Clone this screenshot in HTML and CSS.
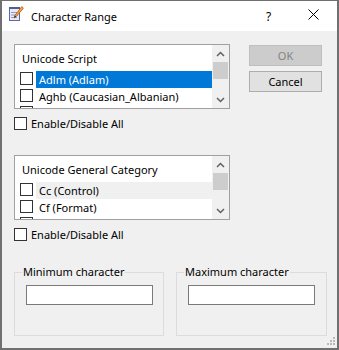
FILE: index.html
```html
<!DOCTYPE html>
<html>
<head>
<meta charset="utf-8">
<link rel="stylesheet" href="styles.css">
</head>
<body>
<div class="window">
  <div class="titlebar">
    <svg class="app-icon" width="16" height="16" viewBox="0 0 16 16">
      <rect x="1.5" y="2.5" width="10" height="12" fill="#e6eaf6" stroke="#5b6aa4"/>
      <rect x="1" y="1" width="11" height="2" fill="#4f5e98"/>
      <line x1="3" y1="6.5" x2="10" y2="6.5" stroke="#8c9ac8"/>
      <line x1="3" y1="9" x2="10" y2="9" stroke="#8c9ac8"/>
      <line x1="3" y1="11.5" x2="9" y2="11.5" stroke="#8c9ac8"/>
      <polygon points="13.8,0.6 15.4,2.2 8.2,10.6 6.2,12 6.8,9.6" fill="#f2b233" stroke="#c0481e" stroke-width="0.8"/>
      <polygon points="6.2,12 6.8,9.6 8.2,10.6" fill="#3a2a20"/>
    </svg>
    <span class="title">Character Range</span>
    <span class="spacer"></span>
    <span class="help">?</span>
    <span class="close">
      <svg width="11" height="11" viewBox="0 0 11 11"><path d="M0.5 0.5 L10.5 10.5 M10.5 0.5 L0.5 10.5" stroke="#000" stroke-width="1"/></svg>
    </span>
  </div>
  <div class="body">
    <div class="top">
      <div class="left">
        <div class="list">
          <div class="list-content">
            <div class="list-header">Unicode Script</div>
            <div class="row selected"><span class="cb"></span><span class="label">Adlm (Adlam)</span></div>
            <div class="row"><span class="cb"></span><span class="label">Aghb (Caucasian_Albanian)</span></div>
            <div class="row"><span class="cb"></span><span class="label"></span></div>
          </div>
          <div class="scrollbar">
            <div class="sb-btn"><svg width="9" height="6" viewBox="0 0 9 6"><path d="M1 5 L4.5 1.5 L8 5" fill="none" stroke="#606060" stroke-width="1.5"/></svg></div>
            <div class="thumb"></div>
            <div class="sb-fill"></div>
            <div class="sb-btn"><svg width="9" height="6" viewBox="0 0 9 6"><path d="M1 1 L4.5 4.5 L8 1" fill="none" stroke="#606060" stroke-width="1.5"/></svg></div>
          </div>
        </div>
        <div class="check-all"><span class="cb"></span><span>Enable/Disable All</span></div>

        <div class="list second">
          <div class="list-content">
            <div class="list-header">Unicode General Category</div>
            <div class="row current"><span class="cb"></span><span class="label">Cc (Control)</span></div>
            <div class="row"><span class="cb"></span><span class="label">Cf (Format)</span></div>
            <div class="row"><span class="cb"></span><span class="label"></span></div>
          </div>
          <div class="scrollbar">
            <div class="sb-btn"><svg width="9" height="6" viewBox="0 0 9 6"><path d="M1 5 L4.5 1.5 L8 5" fill="none" stroke="#606060" stroke-width="1.5"/></svg></div>
            <div class="thumb"></div>
            <div class="sb-fill"></div>
            <div class="sb-btn"><svg width="9" height="6" viewBox="0 0 9 6"><path d="M1 1 L4.5 4.5 L8 1" fill="none" stroke="#606060" stroke-width="1.5"/></svg></div>
          </div>
        </div>
        <div class="check-all"><span class="cb"></span><span>Enable/Disable All</span></div>
      </div>
      <div class="buttons">
        <button class="btn disabled">OK</button>
        <button class="btn">Cancel</button>
      </div>
    </div>
    <div class="groups">
      <fieldset class="group">
        <legend>Minimum character</legend>
        <div class="input"></div>
      </fieldset>
      <fieldset class="group wide">
        <legend>Maximum character</legend>
        <div class="input"></div>
      </fieldset>
    </div>
  </div>
  <svg class="grip" width="8" height="8" viewBox="0 0 8 8">
    <rect x="6" y="0" width="2" height="2" fill="#b9b9b9"/>
    <rect x="3" y="3" width="2" height="2" fill="#b9b9b9"/>
    <rect x="6" y="3" width="2" height="2" fill="#b9b9b9"/>
    <rect x="0" y="6" width="2" height="2" fill="#b9b9b9"/>
    <rect x="3" y="6" width="2" height="2" fill="#b9b9b9"/>
    <rect x="6" y="6" width="2" height="2" fill="#b9b9b9"/>
  </svg>
</div>
</body>
</html>
```
FILE: styles.css
```css
html, body {
  margin: 0;
  padding: 0;
  background: #f0f0f0;
}

.window {
  position: relative;
  width: 339px;
  height: 350px;
  box-sizing: border-box;
  border-style: solid;
  border-color: #707070;
  border-width: 1px 2px 2px 2px;
  background: #f0f0f0;
  display: flex;
  flex-direction: column;
  font-family: "Noto Sans", sans-serif;
  font-size: 11px;
  color: #000;
}

.titlebar {
  height: 30px;
  flex: none;
  background: #fff;
  display: flex;
  align-items: center;
}

.app-icon {
  flex: none;
  margin-left: 6px;
  margin-bottom: 4px;
}

.title {
  margin-left: 7px;
  font-size: 11px;
}

.spacer {
  flex: 1;
}

.help {
  width: 45px;
  text-align: center;
  font-size: 12px;
}

.close {
  width: 45px;
  margin-right: 1px;
  display: flex;
  justify-content: center;
  align-items: center;
  margin-bottom: 3px;
}

.body {
  flex: 1;
  padding: 13px 0 0 12px;
  display: flex;
  flex-direction: column;
}

.top {
  display: flex;
}

.left {
  width: 216px;
  display: flex;
  flex-direction: column;
}

.list {
  height: 65px;
  box-sizing: border-box;
  border: 1px solid #a0a0a0;
  background: #fff;
  display: flex;
  overflow: hidden;
}

.list.second {
  margin-top: 24px;
}

.list-content {
  flex: 1;
  overflow: hidden;
}

.list-header {
  height: 26px;
  display: flex;
  align-items: center;
  padding-left: 7px;
}

.row {
  height: 17px;
  display: flex;
}

.cb {
  flex: none;
  width: 13px;
  height: 13px;
  box-sizing: border-box;
  border: 1px solid #333;
  background: #fff;
}

.row .cb {
  margin: 1px 3px 0 5px;
}

.row .label {
  flex: 1;
  display: flex;
  align-items: center;
  padding-left: 3px;
  white-space: nowrap;
}

.row.selected .label {
  background: #0078d7;
  color: #fff;
}

.row.current .label {
  background: #f0f0f0;
}

.scrollbar {
  flex: none;
  width: 17px;
  background: #f0f0f0;
  display: flex;
  flex-direction: column;
}

.sb-btn {
  height: 17px;
  flex: none;
  display: flex;
  align-items: center;
  justify-content: center;
}

.thumb {
  height: 17px;
  flex: none;
  margin: 0 1px 0 1px;
  background: #cdcdcd;
}

.sb-fill {
  flex: 1;
}

.check-all {
  display: flex;
  align-items: center;
  height: 15px;
  line-height: 15px;
  margin-top: 7px;
  gap: 4px;
  white-space: nowrap;
}

.buttons {
  margin-left: 19px;
  padding-top: 1px;
  display: flex;
  flex-direction: column;
  gap: 5px;
}

.btn {
  width: 73px;
  height: 21px;
  padding: 0;
  margin: 0;
  box-sizing: border-box;
  border: 1px solid #adadad;
  background: #e1e1e1;
  font-family: inherit;
  font-size: 11px;
  color: #000;
}

.btn.disabled {
  background: #cccccc;
  border-color: #bfbfbf;
  color: #838383;
}

.groups {
  display: flex;
  gap: 12px;
  margin-top: 23px;
}

.group {
  margin: 0;
  padding: 0;
  width: 150px;
  height: 71px;
  box-sizing: border-box;
  border: 1px solid #dcdcdc;
}

.group.wide {
  width: 151px;
}

.group legend {
  margin-left: 7px;
  padding: 0 1px;
  line-height: 14px;
}

.input {
  width: 127px;
  height: 20px;
  box-sizing: border-box;
  border: 1px solid #7a7a7a;
  background: #fff;
  margin: 6px 0 0 11px;
}

.grip {
  position: absolute;
  right: 2px;
  bottom: 3px;
}
```
